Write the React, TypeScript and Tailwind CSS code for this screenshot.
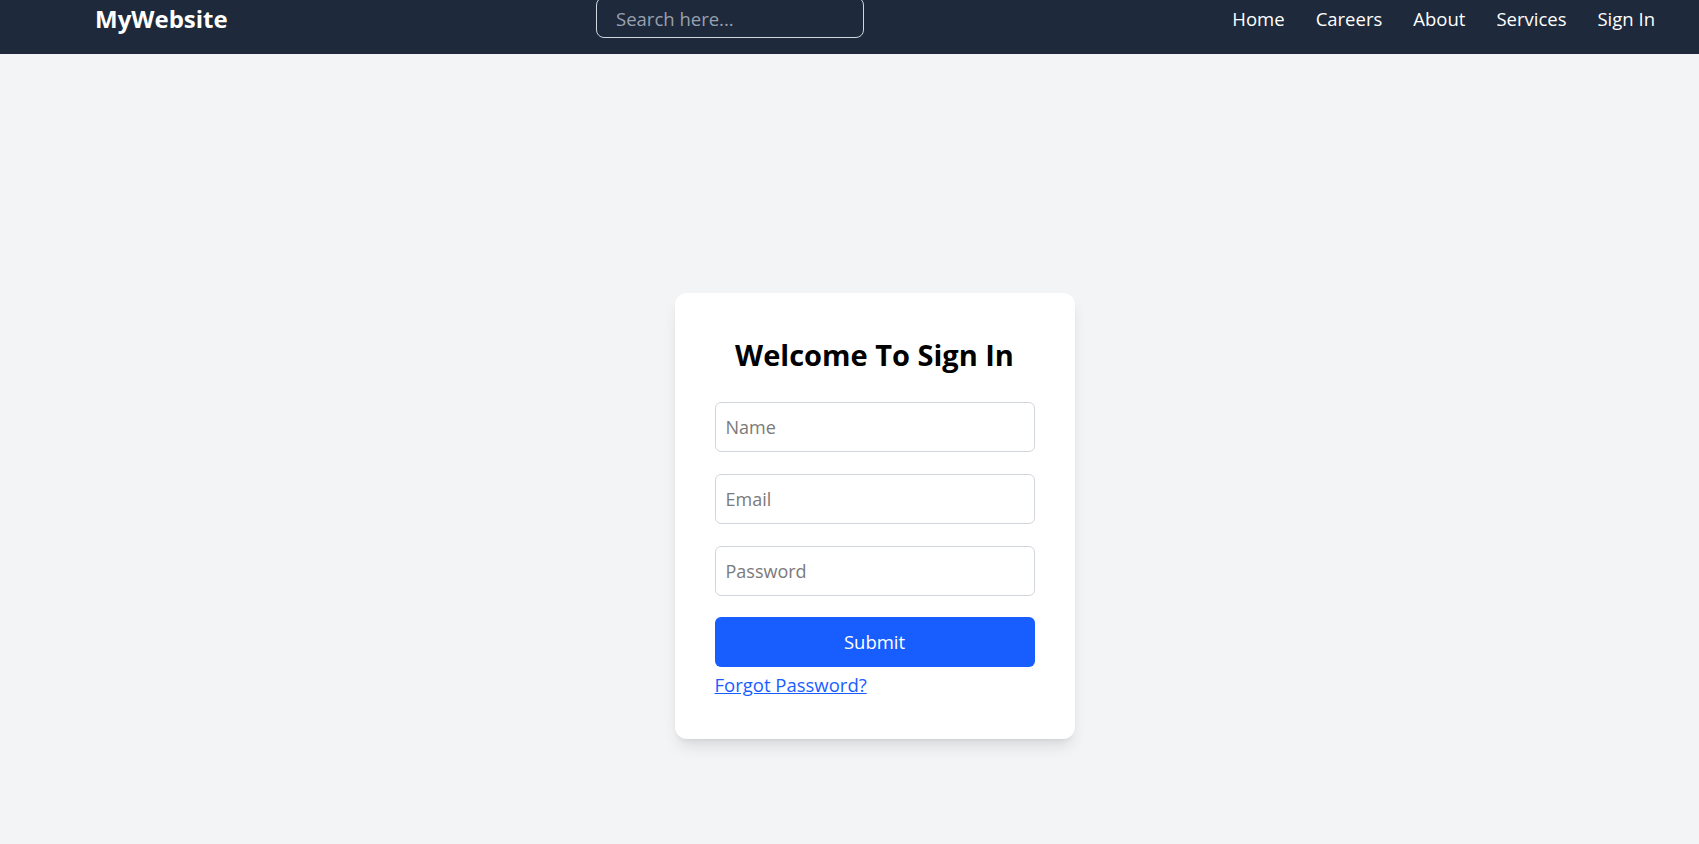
import React from 'react';

const NAV_LINKS = ['Home', 'Careers', 'About', 'Services', 'Sign In'];

const Navbar: React.FC = () => {
  return (
    <nav className="h-[54px] bg-[#1e293b] flex justify-between items-start pl-[95px] pr-[44px] pt-[3px]">
      <a href="#" className="text-white font-bold text-[24px] leading-[32px]">
        MyWebsite
      </a>
      <input
        type="text"
        placeholder="Search here..."
        className="-mt-[6px] w-[268px] h-[41px] rounded-lg border border-gray-300 bg-transparent px-[19px] pt-[2px] text-[18.5px] text-white placeholder:text-gray-400 outline-none"
      />
      <ul className="flex gap-[31px] pt-[2px]">
        {NAV_LINKS.map((link) => (
          <li key={link}>
            <a href="#" className="text-white text-[18.5px] leading-[28px]">
              {link}
            </a>
          </li>
        ))}
      </ul>
    </nav>
  );
};

const SignInCard: React.FC = () => {
  return (
    <form className="w-[400px] bg-white rounded-xl shadow-lg p-10 flex flex-col">
      <h2 className="text-center font-bold text-[29px] leading-[44px] mb-[25px] text-black">
        Welcome To Sign In
      </h2>
      <div className="flex flex-col gap-[22px]">
        <input type="text" placeholder="Name" className="h-[50px] rounded-md border border-gray-300 px-[10px] text-[18px] placeholder:text-[#7a7a7a] outline-none" />
        <input type="email" placeholder="Email" className="h-[50px] rounded-md border border-gray-300 px-[10px] text-[18px] placeholder:text-[#7a7a7a] outline-none" />
        <input type="password" placeholder="Password" className="h-[50px] rounded-md border border-gray-300 px-[10px] text-[18px] placeholder:text-[#7a7a7a] outline-none" />
        <button type="button" className="h-[50px] -mt-[1px] rounded-md bg-[#185eff] text-white text-[18.5px]">
          Submit
        </button>
      </div>
      <a href="#" className="self-start mt-[4px] text-[#185eff] underline text-[18.5px] leading-[28px]">
        Forgot Password?
      </a>
    </form>
  );
};

export default function App() {
  return (
    <div className="min-h-screen bg-gray-100 font-['Open_Sans',sans-serif]">
      <Navbar />
      <main className="flex justify-center pl-[50px] pt-[239px] pb-[100px]">
        <SignInCard />
      </main>
    </div>
  );
}
